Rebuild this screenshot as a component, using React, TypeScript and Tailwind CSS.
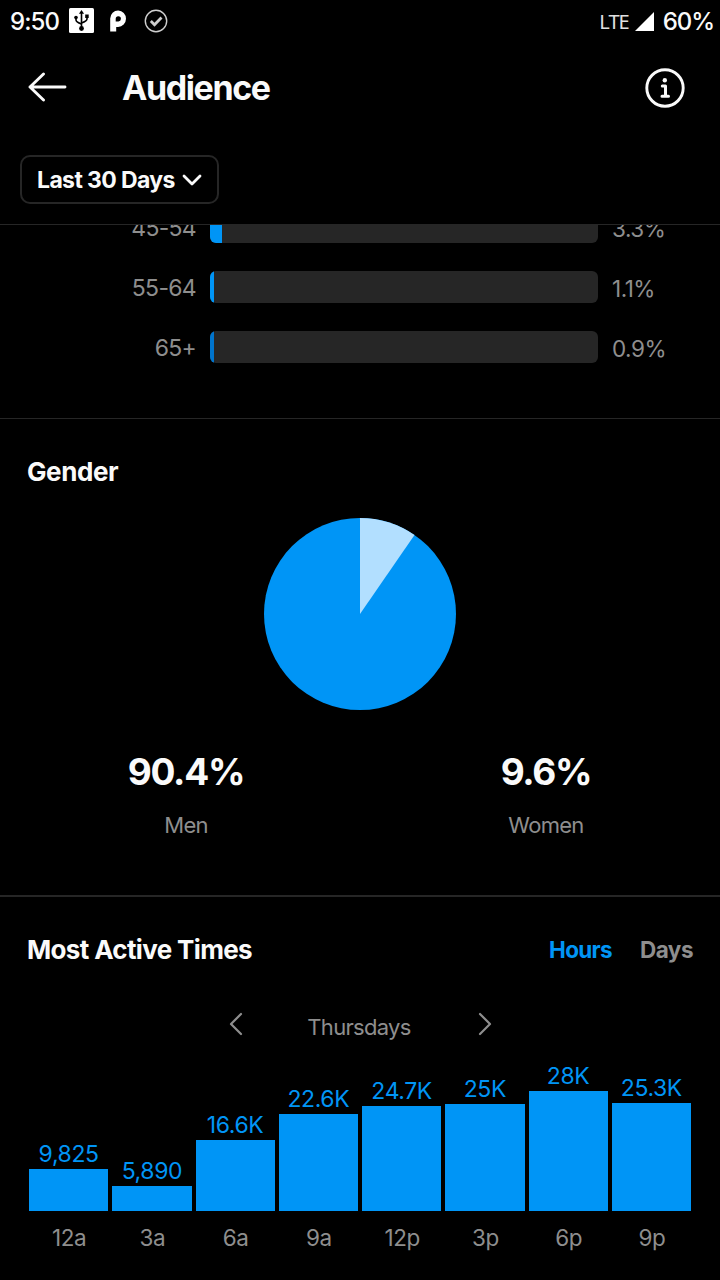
const ageGroups = [
    { range: '45-54', percent: '3.3%', fill: 'w-3 bg-[#0095f6]' },
    { range: '55-64', percent: '1.1%', fill: 'w-1 bg-[#0095f6]' },
    { range: '65+', percent: '0.9%', fill: 'w-1 bg-[#0074cc]' },
];

const hours = [
    { hour: '12a', label: '9,825', height: 42 },
    { hour: '3a', label: '5,890', height: 25 },
    { hour: '6a', label: '16.6K', height: 71 },
    { hour: '9a', label: '22.6K', height: 97 },
    { hour: '12p', label: '24.7K', height: 105 },
    { hour: '3p', label: '25K', height: 107 },
    { hour: '6p', label: '28K', height: 120 },
    { hour: '9p', label: '25.3K', height: 108 },
];

function StatusBar() {
    return (
        <div className="flex h-11 items-center justify-between pl-[10px] pr-[6px] text-[24px] font-medium tracking-[-0.9px]">
            <div className="flex items-center">
                <span className="w-[59px]">9:50</span>
                <svg width="25" height="25" viewBox="0 0 25 25" className="-mt-[3px]">
                    <rect width="25" height="25" rx="1.5" fill="#fff" />
                    <g stroke="#000" strokeWidth="1.6" fill="none">
                        <path d="M12.5 4v16" />
                        <path d="M7 9.5v2.5q0 2 5.5 4" />
                        <path d="M18 8.5v2.5q0 2-5.5 4" />
                    </g>
                    <path d="M12.5 2l2.600 3.800h-5.200z" />
                    <circle cx="7" cy="9.5" r="1.8" />
                    <path d="M16.2 6.500h3.500v3.500h-3.500z" />
                    <circle cx="12.5" cy="20.5" r="2.400" />
                </svg>
                <svg width="18" height="22" viewBox="0 0 18 22" className="ml-[15px] -mt-[2px]">
                    <path fillRule="evenodd" d="M1.200 21.500V8.500a7.900 8.200 0 1 1 7.900 8.400H7.200v4.600zM6.700 11.400h2.400a2.600 2.600 0 1 0-2.400-2.600z" fill="#fff" />
                </svg>
                <svg width="24" height="24" viewBox="0 0 24 24" fill="none" className="ml-[17px] -mt-[3px]">
                    <circle cx="12" cy="12" r="10.7" stroke="#cfcfcf" strokeWidth="1.4" />
                    <path d="M6.800 12l3.700 3.700 7-7.200" stroke="#cfcfcf" strokeWidth="2.8" />
                </svg>
            </div>
            <div className="flex items-center">
                <span className="font-['Noto_Sans',sans-serif] text-[20px] font-normal text-[#e0e0e0]">LTE</span>
                <svg width="19" height="19" viewBox="0 0 19 19" className="ml-[6px] -mt-[2px]">
                    <path d="M19 0v19H0z" fill="#fff" />
                </svg>
                <span className="ml-[9px] tracking-[-1.1px]">60%</span>
            </div>
        </div>
    );
}

function Header() {
    return (
        <header className="flex h-[87px] items-center pl-7 pr-[35px]">
            <svg width="39" height="30" viewBox="0 0 39 30" fill="none" stroke="#fafafa" strokeWidth="2.9" strokeLinecap="round" strokeLinejoin="round" className="-mt-px">
                <path d="M37 15H2M15.500 2L2 15l13.500 13" />
            </svg>
            <h1 className="ml-[55px] flex-1 text-[34px] font-bold tracking-[-1.4px]">Audience</h1>
            <svg width="40" height="40" viewBox="0 0 40 40" fill="none" stroke="#fafafa" className="mt-px">
                <circle cx="20" cy="20" r="18.2" strokeWidth="2.9" />
                <circle cx="19.8" cy="12.3" r="2.2" fill="#fafafa" stroke="none" />
                <path d="M17.300 18h3.200v10.300M17 28.300h6.500" strokeWidth="3" strokeLinecap="round" strokeLinejoin="round" />
            </svg>
        </header>
    );
}

function AgeRange() {
    return (
        <section className="h-[194px] overflow-hidden border-b border-[#262626]">
            <div className="-mt-[14px] flex flex-col gap-7">
                {ageGroups.map(group => (
                    <div key={group.range} className="flex h-8 items-center text-[#8e8e8e]">
                        <span className="w-[196px] pt-[3px] text-right text-[23px] tracking-[-0.7px]">{group.range}</span>
                        <div className="ml-[14px] h-8 w-[388px] overflow-hidden rounded-[6px] bg-[#262626]">
                            <div className={`h-full ${group.fill}`} />
                        </div>
                        <span className="ml-[14px] pt-[3px] text-[22.5px] tracking-[-0.5px]">{group.percent}</span>
                    </div>
                ))}
            </div>
        </section>
    );
}

function Gender() {
    return (
        <section className="h-[478px] border-b-2 border-[#262626] pt-[35px]">
            <h2 className="pl-[27px] text-[26px] leading-9 font-bold tracking-[-0.4px]">Gender</h2>
            <svg width="192" height="192" viewBox="0 0 192 192" className="mx-auto mt-7">
                <circle cx="96" cy="96" r="96" fill="#0095f6" />
                <path d="M96 96V0a96 96 0 0 1 54.500 17z" fill="#b2dfff" />
            </svg>
            <div className="mt-[38px] -mr-[6px] grid grid-cols-2 pl-[6px] text-center">
                <div>
                    <p className="text-[37px] leading-[48px] font-bold tracking-[-1.3px]">90.4%</p>
                    <p className="mt-[13px] text-[22px] leading-8 tracking-[-0.8px] text-[#8e8e8e]">Men</p>
                </div>
                <div>
                    <p className="text-[37px] leading-[48px] font-bold tracking-[-1.3px]">9.6%</p>
                    <p className="mt-[13px] text-[22px] leading-8 tracking-[-0.7px] text-[#8e8e8e]">Women</p>
                </div>
            </div>
        </section>
    );
}

function ActiveTimes() {
    return (
        <section className="pt-[35px]">
            <div className="flex items-center px-[27px] leading-9 font-bold">
                <h2 className="flex-1 text-[26px] tracking-[-0.65px]">Most Active Times</h2>
                <button className="text-[22.5px] tracking-[-0.7px] text-[#0095f6]">Hours</button>
                <button className="ml-7 text-[22.5px] tracking-[-0.5px] text-[#8e8e8e]">Days</button>
            </div>
            <div className="mt-9 flex h-11 items-center justify-center pl-px text-[22px] text-[#8e8e8e]">
                <svg width="14" height="24" viewBox="0 0 14 24" fill="none" stroke="currentColor" strokeWidth="2.2" strokeLinecap="round" strokeLinejoin="round" className="-mt-[5px]">
                    <path d="M12 2L2 12l10 10" />
                </svg>
                <span className="w-[235px] pt-[3px] pr-[3px] text-center tracking-[-0.7px]">Thursdays</span>
                <svg width="14" height="24" viewBox="0 0 14 24" fill="none" stroke="currentColor" strokeWidth="2.2" strokeLinecap="round" strokeLinejoin="round" className="-mt-[5px]">
                    <path d="M2 2l10 10L2 22" />
                </svg>
            </div>
            <div className="mt-[11px] grid h-[152px] grid-cols-8 items-end gap-1 px-[29px] text-center text-[23px] tracking-[-0.4px]">
                {hours.map(item => (
                    <div key={item.hour}>
                        <p className="leading-[30px] text-[#0095f6]">{item.label}</p>
                        <div className="bg-[#0095f6]" style={{ height: item.height }} />
                    </div>
                ))}
            </div>
            <div className="mt-[11px] grid grid-cols-8 gap-1 px-[29px] text-center text-[22.5px] leading-8 tracking-[-0.4px] text-[#8e8e8e]">
                {hours.map(item => (
                    <span key={item.hour} className="pl-px">{item.hour}</span>
                ))}
            </div>
        </section>
    );
}

export default function App() {
    return (
        <main className="h-[1280px] w-[720px] overflow-hidden bg-black font-['Inter',sans-serif] text-[#fafafa]">
            <StatusBar />
            <Header />
            <div className="h-[94px] border-b border-[#262626] pt-6 pl-5">
                <button className="flex h-[49px] w-[199px] items-center rounded-[10px] border-2 border-[#262626] pl-[15px] text-[23px] font-bold tracking-[-0.62px]">
                    <span className="pt-px">Last 30 Days</span>
                    <svg width="20" height="14" viewBox="0 0 20 14" fill="none" stroke="#fafafa" strokeWidth="2.8" strokeLinecap="round" strokeLinejoin="round" className="ml-[7px]">
                        <path d="M2 3l8 8 8-8" />
                    </svg>
                </button>
            </div>
            <AgeRange />
            <Gender />
            <ActiveTimes />
        </main>
    );
}
